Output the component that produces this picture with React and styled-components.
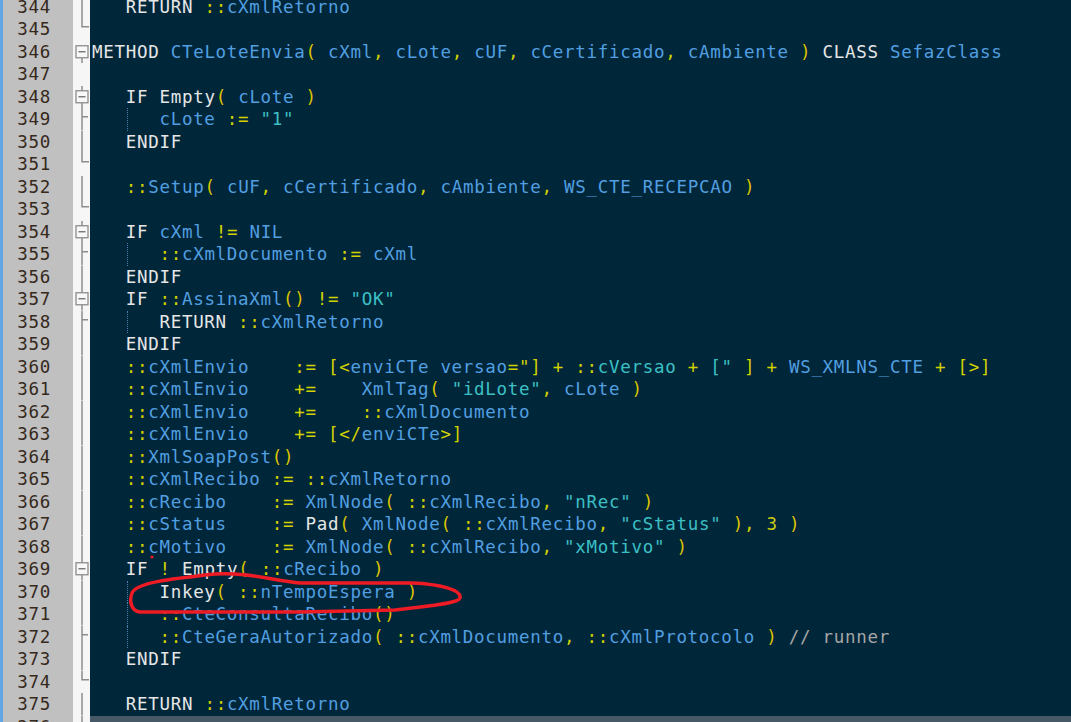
import React from 'react';
import styled, { createGlobalStyle } from 'styled-components';

const Global = createGlobalStyle`
    html, body {
        margin: 0;
        padding: 0;
        background: #00263a;
        overflow: hidden;
    }
`;

const ROW = 22.5;

const Editor = styled.div`
    position: relative;
    width: 1071px;
    height: 722px;
    overflow: hidden;
    background: #00263a;
    border-left: 3px solid #62a6e4;
    box-sizing: border-box;
    font-family: "DejaVu Sans Mono", "Liberation Mono", monospace;
    font-size: 17.5px;
    letter-spacing: 0.7px;
`;

const Lines = styled.div`
    display: flex;
    flex-direction: column;
    margin-top: -4.25px;
`;

const Row = styled.div`
    display: grid;
    grid-template-columns: 70px 17px 1fr;
    height: ${ROW}px;
    line-height: ${ROW}px;
`;

const Num = styled.div`
    background: #c0c0c0;
    color: #35291c;
    text-align: right;
    padding-right: 22px;
`;

const Fold = styled.div`
    background: #f6f6f6;
    svg {
        display: block;
    }
`;

const Code = styled.div`
    position: relative;
    padding-left: 2px;
    white-space: pre;
    background: ${p => (p.$bar ? '#475966' : 'transparent')};
    &::before {
        content: '';
        display: ${p => (p.$guide ? 'block' : 'none')};
        position: absolute;
        left: 37px;
        top: 0;
        bottom: 0;
        border-left: 1px dotted #4f7fb0;
    }
`;

const colors = {
    k: '#e6e6e6',
    i: '#529fe0',
    y: '#d2d200',
    p: '#dcc400',
    s: '#3cc0c4',
    n: '#c8cc10',
    c: '#a6a6a6',
    t: '#e6e6e6',
};

const Tok = styled.span`
    color: ${p => colors[p.$kind]};
`;

const FoldMark = ({ type }) => {
    const h = ROW;
    const c = h / 2 - 0.5;
    const stroke = '#8c8c8c';
    return (
        <svg width="17" height={h} viewBox={`0 0 17 ${h}`}>
            {(type === 'line' || type === 'tick') && (
                <line x1="9" y1="0" x2="9" y2={h} stroke={stroke} strokeWidth="1.5" />
            )}
            {type === 'tick' && <line x1="9" y1={c - 2} x2="15" y2={c - 2} stroke={stroke} strokeWidth="1.5" />}
            {type === 'end' && (
                <path d={`M9 0 V${c - 2} H16`} fill="none" stroke={stroke} strokeWidth="1.5" />
            )}
            {(type === 'box' || type === 'boxStart') && (
                <g>
                    {type === 'box' && <line x1="9" y1="0" x2="9" y2={c - 6} stroke={stroke} strokeWidth="1.5" />}
                    <line x1="9" y1={c + 6} x2="9" y2={h} stroke={stroke} strokeWidth="1.5" />
                    <rect x="3" y={c - 6} width="12" height="12" fill="#f8f8f8" stroke={stroke} strokeWidth="1.3" />
                    <line x1="5.5" y1={c} x2="12.5" y2={c} stroke="#6a6a6a" strokeWidth="1.3" />
                </g>
            )}
        </svg>
    );
};

const K = t => ['k', t];
const I = t => ['i', t];
const Y = t => ['y', t];
const P = t => ['p', t];
const S = t => ['s', t];
const N = t => ['n', t];
const C = t => ['c', t];
const _ = t => ['t', t];

const code = [
    { n: 344, f: 'line', t: [_('   '), K('RETURN'), _(' '), Y('::'), I('cXmlRetorno')] },
    { n: 345, f: 'end', t: [] },
    {
        n: 346, f: 'boxStart', t: [K('METHOD'), _(' '), I('CTeLoteEnvia'), P('('), _(' '), I('cXml'), Y(','), _(' '), I('cLote'), Y(','), _(' '),
            I('cUF'), Y(','), _(' '), I('cCertificado'), Y(','), _(' '), I('cAmbiente'), _(' '), P(')'), _(' '), K('CLASS'), _(' '), I('SefazClass')],
    },
    { n: 347, f: 'none', t: [] },
    { n: 348, f: 'box', t: [_('   '), K('IF'), _(' '), K('Empty'), P('('), _(' '), I('cLote'), _(' '), P(')')] },
    { n: 349, f: 'tick', g: true, t: [_('      '), I('cLote'), _(' '), Y(':='), _(' '), S('"1"')] },
    { n: 350, f: 'line', t: [_('   '), K('ENDIF')] },
    { n: 351, f: 'end', t: [] },
    {
        n: 352, f: 'line', t: [_('   '), Y('::'), I('Setup'), P('('), _(' '), I('cUF'), Y(','), _(' '), I('cCertificado'), Y(','), _(' '),
            I('cAmbiente'), Y(','), _(' '), I('WS_CTE_RECEPCAO'), _(' '), P(')')],
    },
    { n: 353, f: 'end', t: [] },
    { n: 354, f: 'box', t: [_('   '), K('IF'), _(' '), I('cXml'), _(' '), Y('!='), _(' '), I('NIL')] },
    { n: 355, f: 'tick', g: true, t: [_('      '), Y('::'), I('cXmlDocumento'), _(' '), Y(':='), _(' '), I('cXml')] },
    { n: 356, f: 'line', t: [_('   '), K('ENDIF')] },
    { n: 357, f: 'box', t: [_('   '), K('IF'), _(' '), Y('::'), I('AssinaXml'), P('()'), _(' '), Y('!='), _(' '), S('"OK"')] },
    { n: 358, f: 'tick', g: true, t: [_('      '), K('RETURN'), _(' '), Y('::'), I('cXmlRetorno')] },
    { n: 359, f: 'line', t: [_('   '), K('ENDIF')] },
    {
        n: 360, f: 'line', t: [_('   '), Y('::'), I('cXmlEnvio'), _('    '), Y(':='), _(' '), Y('[<'), I('enviCTe versao'), Y('="]'), _(' '),
            Y('+'), _(' '), Y('::'), S('cVersao'), _(' '), Y('+'), _(' '), S('["'), _(' '), Y(']'), _(' '), Y('+'), _(' '),
            I('WS_XMLNS_CTE'), _(' '), Y('+'), _(' '), Y('[>]')],
    },
    {
        n: 361, f: 'line', t: [_('   '), Y('::'), I('cXmlEnvio'), _('    '), Y('+='), _('    '), I('XmlTag'), P('('), _(' '),
            S('"idLote"'), Y(','), _(' '), I('cLote'), _(' '), P(')')],
    },
    { n: 362, f: 'line', t: [_('   '), Y('::'), I('cXmlEnvio'), _('    '), Y('+='), _('    '), Y('::'), I('cXmlDocumento')] },
    { n: 363, f: 'line', t: [_('   '), Y('::'), I('cXmlEnvio'), _('    '), Y('+='), _(' '), Y('[</'), I('enviCTe'), Y('>]')] },
    { n: 364, f: 'line', t: [_('   '), Y('::'), I('XmlSoapPost'), P('()')] },
    { n: 365, f: 'line', t: [_('   '), Y('::'), I('cXmlRecibo'), _(' '), Y(':='), _(' '), Y('::'), I('cXmlRetorno')] },
    {
        n: 366, f: 'line', t: [_('   '), Y('::'), I('cRecibo'), _('    '), Y(':='), _(' '), I('XmlNode'), P('('), _(' '), Y('::'),
            I('cXmlRecibo'), Y(','), _(' '), S('"nRec"'), _(' '), P(')')],
    },
    {
        n: 367, f: 'line', t: [_('   '), Y('::'), I('cStatus'), _('    '), Y(':='), _(' '), K('Pad'), P('('), _(' '), I('XmlNode'),
            P('('), _(' '), Y('::'), I('cXmlRecibo'), Y(','), _(' '), S('"cStatus"'), _(' '), P(')'), Y(','), _(' '), N('3'), _(' '), P(')')],
    },
    {
        n: 368, f: 'line', t: [_('   '), Y('::'), I('cMotivo'), _('    '), Y(':='), _(' '), I('XmlNode'), P('('), _(' '), Y('::'),
            I('cXmlRecibo'), Y(','), _(' '), S('"xMotivo"'), _(' '), P(')')],
    },
    { n: 369, f: 'box', t: [_('   '), K('IF'), _(' '), Y('!'), _(' '), K('Empty'), P('('), _(' '), Y('::'), I('cRecibo'), _(' '), P(')')] },
    { n: 370, f: 'line', g: true, t: [_('      '), K('Inkey'), P('('), _(' '), Y('::'), I('nTempoEspera'), _(' '), P(')')] },
    { n: 371, f: 'line', g: true, t: [_('      '), Y('::'), I('CteConsultaRecibo'), P('()')] },
    {
        n: 372, f: 'tick', g: true, t: [_('      '), Y('::'), I('CteGeraAutorizado'), P('('), _(' '), Y('::'), I('cXmlDocumento'),
            Y(','), _(' '), Y('::'), I('cXmlProtocolo'), _(' '), P(')'), _(' '), C('// runner')],
    },
    { n: 373, f: 'line', t: [_('   '), K('ENDIF')] },
    { n: 374, f: 'end', t: [] },
    { n: 375, f: 'line', t: [_('   '), K('RETURN'), _(' '), Y('::'), I('cXmlRetorno')] },
    { n: 376, f: 'line', bar: true, t: [] },
];

const Overlay = styled.svg`
    position: absolute;
    left: -3px;
    top: 0;
    pointer-events: none;
`;

const Circled = () => (
    <Overlay width="1071" height="722" viewBox="0 0 1071 722">
        <path
            d="M300 583 L412 583 C440 584 462 590 460 598 C458 604 425 606 395 610 L300 612 L140 612
               C131 611 129 601 132 593 C136 583 168 579 215 574 C245 572 272 580 300 583"
            fill="none"
            stroke="#ee1b24"
            strokeWidth="3.5"
            strokeLinejoin="round"
            strokeLinecap="round"
        />
        <circle cx="152" cy="557" r="1.6" fill="#ee1b24" />
    </Overlay>
);

const App = () => {
    return (
        <>
            <Global />
            <Editor>
                <Lines>
                    {code.map(line => (
                        <Row key={line.n}>
                            <Num>{line.n}</Num>
                            <Fold>
                                <FoldMark type={line.f} />
                            </Fold>
                            <Code $guide={line.g} $bar={line.bar}>
                                {line.t.map(([kind, text], i) => (
                                    <Tok key={i} $kind={kind}>{text}</Tok>
                                ))}
                            </Code>
                        </Row>
                    ))}
                </Lines>
                <Circled />
            </Editor>
        </>
    );
};

export default App;
